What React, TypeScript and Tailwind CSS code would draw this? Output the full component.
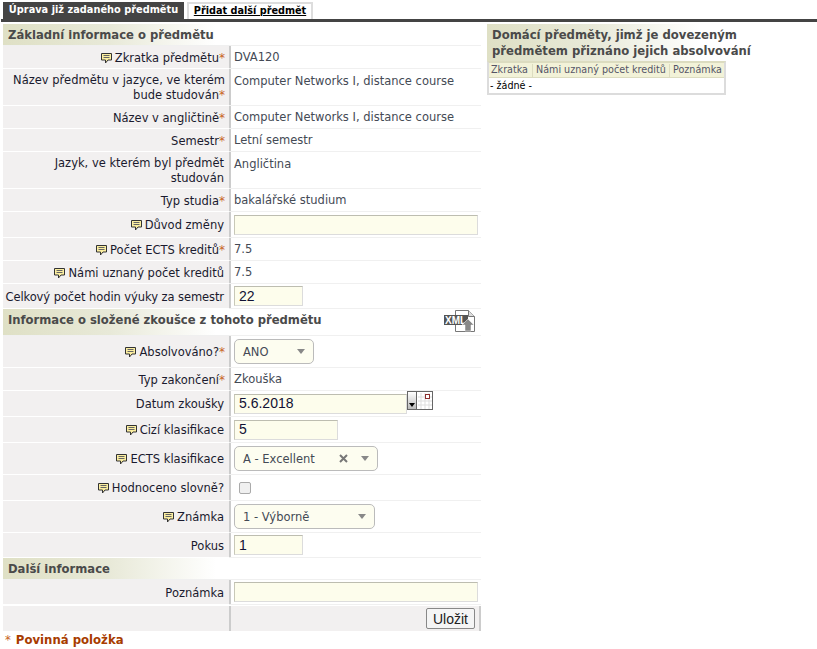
import type { ReactNode } from "react"

function Note() {
  return (
    <svg width="11" height="11" viewBox="0 0 11 11" className="inline-block mr-[3px] align-[-2px]">
      <path d="M0.5 0.5h10v6.5h-3.5l-2.5 3v-3h-4z" fill="#fbeea0" stroke="#333" strokeWidth="1" />
      <path d="M2.5 2.5h6M2.5 4.5h6" stroke="#666" strokeWidth="1" />
    </svg>
  )
}

function Star() {
  return <span className="text-[#c8641e] text-[12px]">*</span>
}

function Row({ h, label, note, req, children }: { h: string; label: ReactNode; note?: boolean; req?: boolean; children?: ReactNode }) {
  return (
    <div className={`flex border-b border-[#f0f0f0] ${h}`}>
      <div className={`w-[226px] shrink-0 bg-[#f2f0f0] border-b border-white -mb-px pt-[2px] text-right text-[#1a1a2e] leading-[15px] flex flex-col justify-center ${req ? "pr-[4px]" : "pr-[5px]"}`}>
        <div>
          {note && <Note />}
          {label}
          {req && <Star />}
        </div>
      </div>
      <div className="w-[2px] shrink-0 bg-[#cccccc]" />
      <div className="flex-1 pl-[3px] pr-[3px] text-[#444a55] flex items-center min-w-0">
        {typeof children === "string" ? <span className="pt-[2px]">{children}</span> : children}
      </div>
    </div>
  )
}

function Head({ h, children }: { h: string; children: ReactNode }) {
  return (
    <div className={`${h} w-[213px] pl-[5px] bg-gradient-to-r from-[#dfe0c5] via-[#e8e9d8] to-white font-bold text-[11.6px] text-[#4a4a4a] flex items-center whitespace-nowrap`}>
      {children}
    </div>
  )
}

function TextInput({ w, value }: { w: string; value?: string }) {
  return (
    <input
      readOnly
      value={value ?? ""}
      className={`${w} h-[20px] bg-[#fdfdec] border border-[#dcdcdc] border-t-[#bdbdb0] border-l-[#c8c8b8] px-[4px] text-[14px] text-[#111133] outline-none font-['Liberation_Sans',sans-serif]`}
    />
  )
}

function Select({ w, value, clear }: { w: string; value: string; clear?: boolean }) {
  return (
    <div className={`${w} h-[25px] bg-[#fdfdf0] border border-[#bbbbbb] rounded-[5px] flex items-center pl-[8px] pr-[8px] text-[#444a55]`}>
      <span className="flex-1 pt-[2px]">{value}</span>
      {clear && (
        <svg width="9" height="9" viewBox="0 0 9 9" className="mr-[13px]">
          <path d="M1 1l7 7M8 1l-7 7" stroke="#777777" strokeWidth="2" />
        </svg>
      )}
      <span className="w-0 h-0 border-l-[4px] border-r-[4px] border-t-[5px] border-l-transparent border-r-transparent border-t-[#888888]" />
    </div>
  )
}

export default function App() {
  return (
    <div className="w-[817px] h-[649px] bg-white overflow-hidden text-[11.5px] font-['DejaVu_Sans',sans-serif]">
      <div className="h-[2px]" />
      <div className="flex h-[17px] pl-[3px] gap-[3px]">
        <div className="w-[181px] bg-[#444444] text-white font-bold text-[9.8px] flex items-center justify-center whitespace-nowrap">Úprava již zadaného předmětu</div>
        <div className="w-[126px] bg-white border-2 border-b-0 border-[#dddddd] text-black font-bold underline text-[9.7px] flex items-center justify-center whitespace-nowrap">Přidat další předmět</div>
      </div>
      <div className="h-[3px] bg-[#444444] ml-[1px]" />
      <div className="flex pt-[2px]">
        <div className="w-[478px] ml-[3px] shrink-0">
          <Head h="h-[21px] pt-[2px]">Základní informace o předmětu</Head>
          <div className="h-px bg-[#f0f0f0]" />
          <Row h="h-[23px]" label="Zkratka předmětu" note req>DVA120</Row>
          <Row h="h-[37px]" label="Název předmětu v jazyce, ve kterém bude studován" req>
            <span className="self-start pt-[4px]">Computer Networks I, distance course</span>
          </Row>
          <Row h="h-[23px]" label="Název v angličtině" req>Computer Networks I, distance course</Row>
          <Row h="h-[23px]" label="Semestr" req>Letní semestr</Row>
          <Row h="h-[37px]" label="Jazyk, ve kterém byl předmět studován">
            <span className="self-start pt-[4px]">Angličtina</span>
          </Row>
          <Row h="h-[23px]" label="Typ studia" req>bakalářské studium</Row>
          <Row h="h-[26px]" label="Důvod změny" note><TextInput w="w-[244px]" /></Row>
          <Row h="h-[23px]" label="Počet ECTS kreditů" note req>7.5</Row>
          <Row h="h-[23px]" label="Námi uznaný počet kreditů" note>7.5</Row>
          <Row h="h-[25px]" label={<span className="tracking-[-0.08px] whitespace-nowrap">Celkový počet hodin výuky za semestr</span>}><TextInput w="w-[69px]" value="22" /></Row>
          <div className="relative">
            <Head h="h-[26px] pb-[2px]">Informace o složené zkoušce z tohoto předmětu</Head>
            <svg width="32" height="23" viewBox="0 0 32 23" className="absolute left-[441px] top-[1px]">
              <path d="M11.5 0.5h13l6 6v15h-19z" fill="#ffffff" stroke="#777777" />
              <path d="M24.5 0.5v6h6" fill="#dddddd" stroke="#777777" />
              <rect x="0" y="5" width="24" height="10" fill="#555555" />
              <text x="1" y="14" fontSize="10" fontWeight="bold" fill="#ffffff" fontFamily="Liberation Sans">XML</text>
              <path d="M24 9l6 6h-3v6h-6v-6h-3z" fill="#888888" stroke="#ffffff" strokeWidth="0.5" />
            </svg>
          </div>
          <div className="h-px bg-[#f0f0f0]" />
          <Row h="h-[32px]" label="Absolvováno?" note req><Select w="w-[80px]" value="ANO" /></Row>
          <Row h="h-[23px]" label="Typ zakončení" req>Zkouška</Row>
          <Row h="h-[26px]" label="Datum zkoušky">
            <TextInput w="w-[173px]" value="5.6.2018" />
            <svg width="26" height="19" viewBox="0 0 26 19" className="shrink-0 -mt-[6px]">
              <defs>
                <linearGradient id="calBtn" x1="0" y1="0" x2="0" y2="1">
                  <stop offset="0" stopColor="#ffffff" />
                  <stop offset="1" stopColor="#bbbbbb" />
                </linearGradient>
              </defs>
              <rect x="0.5" y="0.5" width="25" height="18" fill="#ffffff" stroke="#666666" />
              <rect x="1" y="1" width="8" height="17" fill="url(#calBtn)" />
              <path d="M2 12h6l-3 4z" fill="#000000" />
              <path d="M9.5 1v17" stroke="#666666" />
              <path d="M11 6h14M11 10h14M11 14h14M14 2v16M18 2v16M22 2v16" stroke="#dddddd" />
              <rect x="18.5" y="3.5" width="4" height="4" fill="#ffffff" stroke="#8c2f2f" />
            </svg>
          </Row>
          <Row h="h-[26px]" label="Cizí klasifikace" note><TextInput w="w-[104px]" value="5" /></Row>
          <Row h="h-[32px]" label="ECTS klasifikace" note><Select w="w-[144px]" value="A - Excellent" clear /></Row>
          <Row h="h-[26px]" label="Hodnoceno slovně?" note>
            <span className="ml-[5px] w-[12px] h-[12px] bg-[#f0f0f0] border border-[#aaaaaa] rounded-[2px]" />
          </Row>
          <Row h="h-[32px]" label="Známka" note><Select w="w-[141px]" value="1 - Výborně" /></Row>
          <Row h="h-[25px]" label="Pokus"><TextInput w="w-[69px]" value="1" /></Row>
          <Head h="h-[21px] pt-[2px]">Další informace</Head>
          <div className="h-px bg-[#f0f0f0]" />
          <Row h="h-[25px]" label="Poznámka"><TextInput w="w-[244px]" /></Row>
          <div className="flex h-[26px] border-t border-white">
            <div className="w-[226px] shrink-0 bg-[#f2f0f0]" />
            <div className="w-[2px] shrink-0 bg-[#cccccc]" />
            <div className="flex-1 bg-[#f2f0f0] flex items-center justify-end pr-[4px] border-r-2 border-[#cccccc]">
              <button className="w-[49px] h-[21px] bg-[#f5f5f5] border border-[#888888] rounded-[2px] text-[14px] text-[#222222] font-['Liberation_Sans',sans-serif]">Uložit</button>
            </div>
          </div>
          <div className="pl-[2px] pt-[2px] h-[17px] font-bold text-[11.7px] text-[#a83c00] flex items-center">
            <span className="font-normal mr-[5px] text-[#c8641e]">*</span>Povinná položka
          </div>
        </div>
        <div className="ml-[6px] w-[238px]">
          <div className="w-[213px] h-[37px] pl-[5px] bg-gradient-to-r from-[#dfe0c5] via-[#e8e9d8] to-white font-bold text-[11.65px] leading-[16px] text-[#4a4a4a] flex items-center whitespace-nowrap">
            <div>Domácí předměty, jimž je dovezeným<br />předmětem přiznáno jejich absolvování</div>
          </div>
          <div className="w-[239px] border-2 border-[#dcdcdc] border-t-[#dcdcc0] text-[9.6px]">
            <div className="flex h-[15px] pt-[1px] bg-[#f2f2d8] text-[#555566] border-b border-[#dcdcc0]">
              <div className="w-[44px] pl-[2px] border-r border-[#dcdcc0] flex items-center">Zkratka</div>
              <div className="w-[137px] pl-[3px] border-r border-[#dcdcc0] flex items-center whitespace-nowrap">Námi uznaný počet kreditů</div>
              <div className="flex-1 pl-[3px] flex items-center">Poznámka</div>
            </div>
            <div className="h-[15px] pl-[1px] pt-[2px] text-black flex items-center">- žádné -</div>
          </div>
        </div>
      </div>
    </div>
  )
}
